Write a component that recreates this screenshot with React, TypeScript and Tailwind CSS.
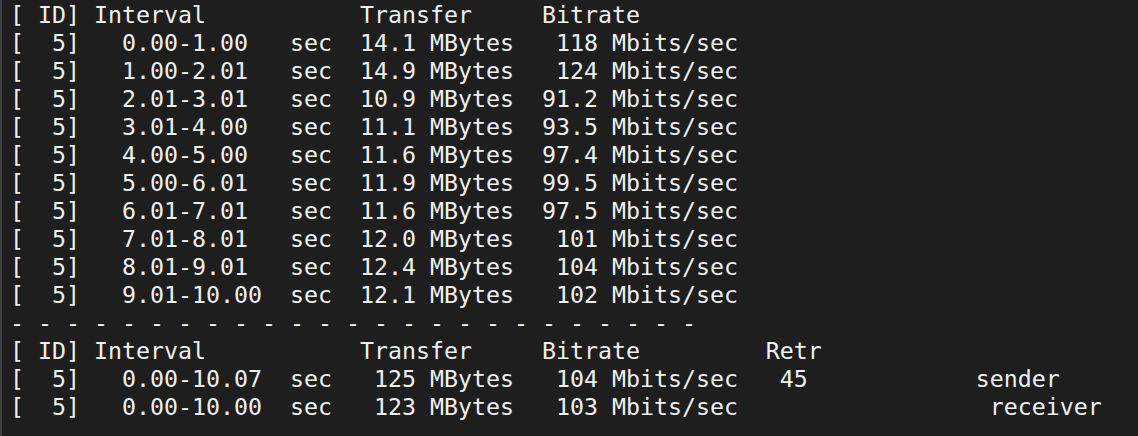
const lines = [
  "[ ID] Interval           Transfer     Bitrate",
  "[  5]   0.00-1.00   sec  14.1 MBytes   118 Mbits/sec",
  "[  5]   1.00-2.01   sec  14.9 MBytes   124 Mbits/sec",
  "[  5]   2.01-3.01   sec  10.9 MBytes  91.2 Mbits/sec",
  "[  5]   3.01-4.00   sec  11.1 MBytes  93.5 Mbits/sec",
  "[  5]   4.00-5.00   sec  11.6 MBytes  97.4 Mbits/sec",
  "[  5]   5.00-6.01   sec  11.9 MBytes  99.5 Mbits/sec",
  "[  5]   6.01-7.01   sec  11.6 MBytes  97.5 Mbits/sec",
  "[  5]   7.01-8.01   sec  12.0 MBytes   101 Mbits/sec",
  "[  5]   8.01-9.01   sec  12.4 MBytes   104 Mbits/sec",
  "[  5]   9.01-10.00  sec  12.1 MBytes   102 Mbits/sec",
  "- - - - - - - - - - - - - - - - - - - - - - - - -",
  "[ ID] Interval           Transfer     Bitrate         Retr",
  "[  5]   0.00-10.07  sec   125 MBytes   104 Mbits/sec   45            sender",
  "[  5]   0.00-10.00  sec   123 MBytes   103 Mbits/sec                  receiver",
];

const App = () => {
  return (
    <div className="flex h-[436px] w-[1138px] overflow-hidden bg-[#1e1e1e]">
      {/* window edge */}
      <div className="w-[2px] shrink-0 bg-[#3f3f3f]" />
      <pre className="pl-[8px] pt-[1px] font-['DejaVu_Sans_Mono',monospace] text-[23.25px] leading-[28px] text-[#f0f0f0]">
        {lines.map((line, i) => (
          <div key={i}>{line}</div>
        ))}
      </pre>
    </div>
  );
};

export default App;
